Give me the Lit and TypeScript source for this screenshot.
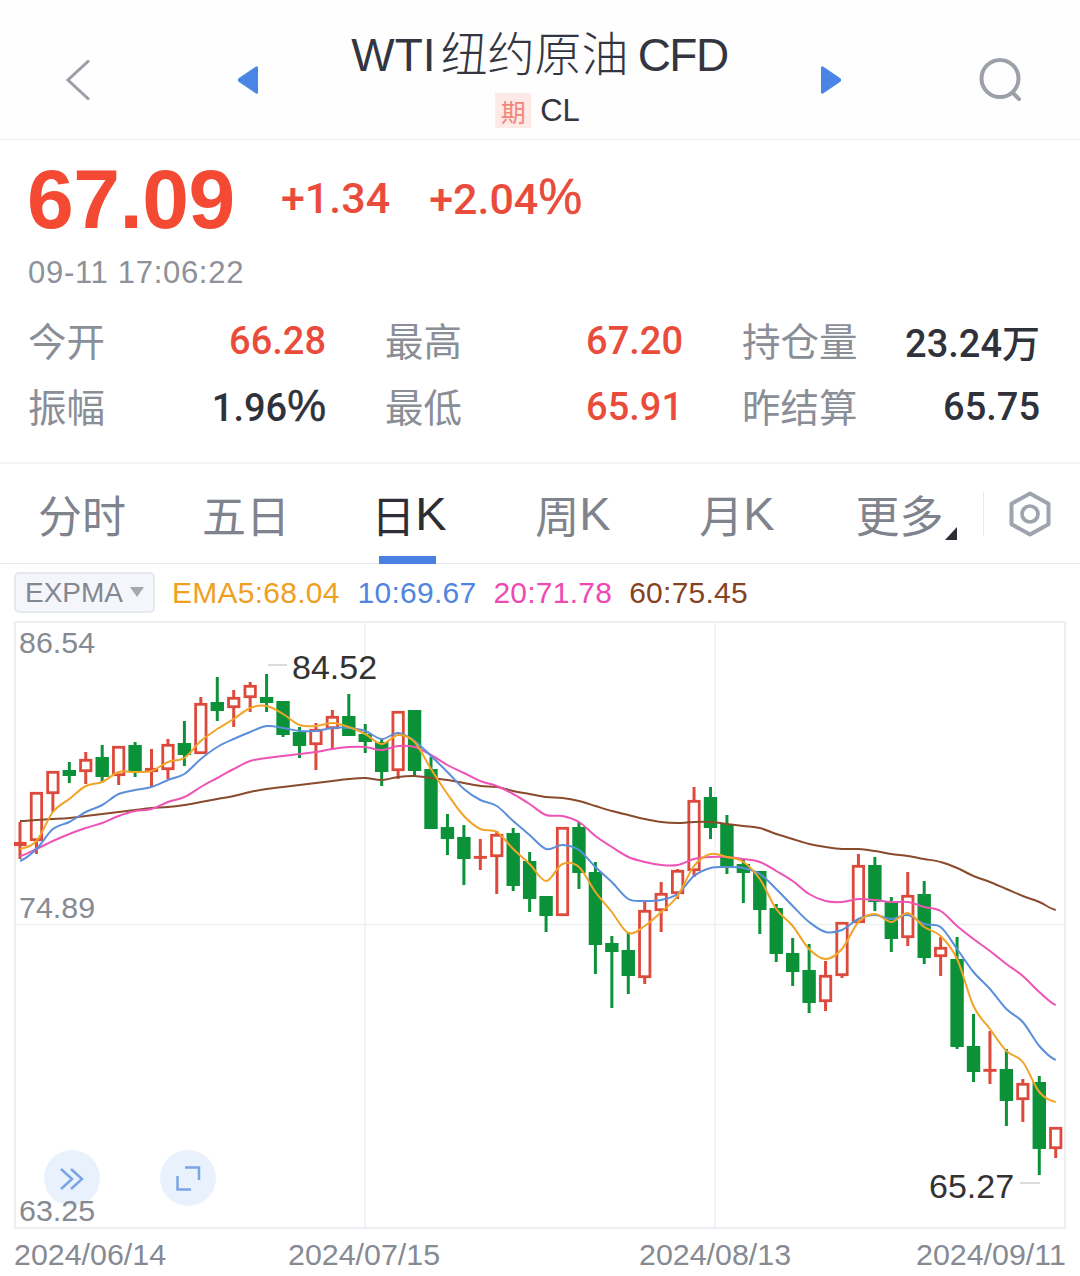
import { LitElement, html, svg, css } from "lit";
import { customElement } from "lit/decorators.js";

type Candle = [string, number, number, number, number];
const candles: Candle[] = [
["r",823,860,843,847],["r",793,855,793,842],["r",772,813,772,795],["g",763,784,771,777],["r",753,785,760,773],
["g",746,783,758,778],["r",747,786,747,777],["g",743,778,746,772],["r",750,787,769,773],["r",740,780,745,771],
["g",722,767,744,756],["r",698,755,704,755],["g",678,722,703,712],["r",691,728,698,709],["r",683,713,686,699],
["g",675,713,698,704],["g",702,738,702,736],["g",728,759,733,747],["r",724,771,730,746],["r",711,750,717,730],
["g",695,737,717,737],["g",725,754,735,743],["g",740,787,743,773],["r",712,780,712,772],["g",711,777,711,772],
["g",758,830,770,830],["g",815,856,828,840],["g",826,886,838,860],["r",840,871,857,859],["r",832,895,835,858],
["g",829,892,834,887],["g",853,913,862,900],["g",897,933,897,917],["r",828,917,828,917],["g",823,890,828,874],
["g",863,975,873,946],["g",937,1009,944,953],["g",933,995,951,977],["r",903,985,911,979],["r",883,933,894,912],
["r",870,900,871,895],["r",788,878,801,872],["g",788,840,798,829],["g",816,875,825,867],["g",860,904,865,874],
["g",872,935,872,911],["g",905,963,909,955],["g",939,987,954,973],["g",945,1014,971,1004],["r",962,1012,976,1003],
["r",923,979,923,977],["r",855,924,866,924],["g",858,912,866,903],["g",898,953,902,940],["r",873,947,896,939],
["g",882,965,895,959],["r",938,977,948,958],["g",938,1050,960,1048],["g",1015,1083,1047,1073],["r",1032,1085,1070,1072],
["g",1050,1127,1070,1102],["r",1080,1123,1084,1101],["g",1077,1176,1083,1150],["r",1128,1159,1128,1150],
];
const ema5 = [850,842,813,800,787,783,773,773,772,763,759,742,730,720,709,707,715,726,727,724,728,735,745,736,743,770,795,817,830,833,850,865,882,865,868,893,913,934,927,913,897,867,855,858,863,880,910,927,950,960,950,923,915,923,914,928,937,960,1007,1030,1052,1063,1093,1103];
const ema10 = [862,850,830,823,813,806,795,791,788,781,775,760,748,740,733,727,729,732,732,729,729,732,740,734,742,757,773,790,801,807,822,836,850,846,851,868,883,900,902,901,895,877,869,868,869,875,890,907,923,933,931,920,916,920,916,925,928,950,973,990,1010,1023,1047,1061];
const ema20 = [857,850,842,835,829,824,817,812,810,803,798,788,779,770,762,759,757,755,753,750,748,748,751,747,748,756,766,774,782,787,795,805,816,817,823,837,848,858,863,866,866,860,858,858,860,863,872,882,895,902,903,900,901,903,903,908,912,927,940,952,965,977,993,1006];
const ema60 = [822,821,820,819,817,815,813,811,809,808,806,803,800,797,793,790,788,786,784,782,780,779,781,778,777,779,781,784,787,788,792,795,798,799,802,807,812,816,820,823,824,823,823,825,827,829,835,840,845,848,850,850,852,855,857,860,863,869,877,883,890,897,903,911];

const X = (i: number) => 20 + 16.44 * i;
const curve = (a: number[]) => {
  let d = `M${X(0).toFixed(1)} ${a[0]}`;
  for (let i = 0; i < a.length - 1; i++) {
    const p0 = a[Math.max(i - 1, 0)], p1 = a[i], p2 = a[i + 1], p3 = a[Math.min(i + 2, a.length - 1)];
    const c1 = p1 + (p2 - p0) / 6, c2 = p2 - (p3 - p1) / 6;
    d += `C${(X(i) + 5.48).toFixed(1)} ${c1.toFixed(1)} ${(X(i + 1) - 5.48).toFixed(1)} ${c2.toFixed(1)} ${X(i + 1).toFixed(1)} ${p2}`;
  }
  return d;
};

@customElement("app-root")
export class AppRoot extends LitElement {
  static styles = css`
    :host { display: block; width: 1080px; height: 1276px; background: #fff; overflow: hidden;
      font-family: "Liberation Sans", "Noto Sans CJK SC", sans-serif; color: #333; }
    svg { display: block; }

    .head { display: grid; height: 140px; box-sizing: border-box; padding: 20px 0 0 66px; align-items: center;
      grid-template-columns: 24px 147px 21px 563px 21px 136px 46px; background: #fefefe;
      border-bottom: 1px solid #f0f0f2; }
    .back { grid-column: 1; }
    .prev { grid-column: 3; }
    .title-box { grid-column: 4; display: flex; flex-direction: column; align-items: center; margin-top: -2px; }
    .next { grid-column: 5; }
    .search { grid-column: 7; }
    .title { font-size: 46px; line-height: 52px; color: #333640; white-space: nowrap; }
    .title .cjk { font-size: 47px; font-weight: 300; margin: 0 9px 0 5px; }
    .title .cfd { letter-spacing: -1.5px; }
    .sub { display: flex; align-items: center; gap: 9px; margin-top: 12px; padding-right: 4px; }
    .tag { width: 36px; height: 35px; background: #fde9e6; color: #f2867a; font-size: 25px; display: flex; align-items: center; justify-content: center; }
    .code { font-size: 31px; color: #333640; line-height: 35px; }

    .quote { padding: 15px 28px 0; height: 324px; box-sizing: border-box; border-bottom: 2px solid #f2f3f5; }
    .price-row { display: flex; align-items: center; height: 88px; }
    .price { font-size: 84px; font-weight: 700; color: #f44a33; line-height: 88px; letter-spacing: -0.5px; width: 254px; margin-left: -1px; }
    .chg { font-family: Roboto, "Liberation Sans", sans-serif; font-size: 43px; font-weight: 500; color: #ea4c3c; white-space: nowrap; margin-top: -2px; }
    .chg + .chg { margin-left: 39px; }
    .pct { font-family: "Liberation Sans", sans-serif; font-size: 1.15em; font-weight: 400; -webkit-text-stroke: 0.5px currentColor; line-height: 1; }
    .time { font-size: 31px; color: #8d9199; line-height: 36px; margin-top: 12px; letter-spacing: 0.7px; }
    .stats { display: grid; grid-template-columns: repeat(3, 298px); column-gap: 59px; row-gap: 21px; margin-top: 25px; }
    .stat { display: flex; justify-content: space-between; align-items: center; height: 45px; }
    .lab { font-size: 38.500px; color: #8a8e97; font-weight: 400; }
    .val { font-family: Roboto, "Liberation Sans", "Noto Sans CJK SC", sans-serif; font-size: 38px; font-weight: 500; color: #2f323a; padding-top: 4px; }
    .val.red { color: #ea4c3c; }

    .tabs { display: grid; grid-template-columns: repeat(6, 164px) 1fr; height: 100px; box-sizing: border-box; border-bottom: 1px solid #e8eaee; }
    .tab { position: relative; display: flex; align-items: center; justify-content: center; font-size: 44px; color: #7f838d; font-weight: 400; box-sizing: border-box; }
    .tab.withk { padding-right: 2px; }
    .tab .k { font-size: 47px; }
    .tab.on { color: #2c2e33; }
    .tab.on::after { content: ""; position: absolute; bottom: -1px; left: 51px; width: 57px; height: 8px; background: #4a80e2; }
    .tab.more { padding-right: 5px; }
    .tab.more::after { content: ""; position: absolute; left: 125px; top: 63px; border-style: solid; border-width: 0 0 13px 12px; border-color: transparent transparent #2c2e33 transparent; }
    .gear { display: flex; align-items: center; gap: 25px; margin-left: -1px; }
    .gear i { width: 1px; height: 44px; background: #e8e9ec; }

    .legend { display: flex; align-items: center; height: 57px; padding-left: 14px; font-size: 30px; letter-spacing: 0.25px; }
    .select { display: flex; align-items: center; justify-content: space-between; box-sizing: border-box; width: 141px; height: 41px; padding: 0 9px 0 9px;
      background: #f5f6fb; border: 2px solid #e6e8f0; border-radius: 5px; color: #83878f; font-size: 28px; letter-spacing: 0; margin-right: 17px; }
    .select b { width: 0; height: 0; border-style: solid; border-width: 10px 7px 0 7px; border-color: #a5a8b0 transparent transparent transparent; margin-bottom: 2px; }
    .legend span { margin-right: 17px; white-space: nowrap; }
    .legend span.o { margin-right: 18px; }
    .o { color: #f0a01f; } .b { color: #5186de; } .p { color: #ee4bb2; } .br { color: #86431f; }

    .chart { position: relative; margin: 0 14px; width: 1052px; height: 608px; }
    .ylab, .mark { position: absolute; font-size: 30.4px; line-height: 34px; color: #868a92; }
    .mark { color: #333; font-size: 34px; line-height: 38px; }
    .round { position: absolute; width: 56px; height: 56px; border-radius: 50%; background: #e9f1fc; top: 529px; }
    .round svg { position: absolute; }
    .round.l { left: 30px; } .round.l svg { left: 14px; top: 16px; }
    .round.r { left: 146px; } .round.r svg { left: 15px; top: 15px; }

    .axis { display: grid; grid-template-columns: 274px 351px 277px auto; padding-left: 14px; font-size: 30.4px; line-height: 34px; color: #868a92; margin-top: 8px; }
    .y1 { left: 5px; top: 4px; } .y2 { left: 5px; top: 269px; } .y3 { left: 5px; top: 572px; }
    .m1 { left: 278px; top: 27px; } .m2 { left: 915px; top: 546px; }
  `;

  render() {
    return html`
      <div class="head">
        <svg class="back" width="24" height="42" viewBox="0 0 24 42"><path d="M23 1.5 2 21l21 19.5" fill="none" stroke="#9a9ea7" stroke-width="3"/></svg>
        <svg class="prev" width="21" height="30" viewBox="0 0 21 30"><path d="M19 1.5 2 13a2.4 2.4 0 0 0 0 4l17 11.500a1.300 1.300 0 0 0 2-1V2.500a1.300 1.300 0 0 0-2-1z" fill="#4a85e6"/></svg>
        <div class="title-box">
          <div class="title">WTI<span class="cjk">纽约原油</span><span class="cfd">CFD</span></div>
          <div class="sub"><span class="tag">期</span><span class="code">CL</span></div>
        </div>
        <svg class="next" width="21" height="30" viewBox="0 0 21 30"><path d="M2 1.500 19 13a2.400 2.400 0 0 1 0 4L2 28.500a1.300 1.300 0 0 1-2-1V2.500a1.300 1.300 0 0 1 2-1z" fill="#4a85e6"/></svg>
        <svg class="search" width="46" height="46" viewBox="0 0 46 46"><circle cx="22" cy="21.500" r="18.500" fill="none" stroke="#9ca0a9" stroke-width="4"/><path d="M35 36l6 6" fill="none" stroke="#9ca0a9" stroke-width="4" stroke-linecap="round"/></svg>
      </div>

      <div class="quote">
        <div class="price-row">
          <span class="price">67.09</span>
          <span class="chg">+1.34</span>
          <span class="chg">+2.04<span class="pct">%</span></span>
        </div>
        <div class="time">09-11 17:06:22</div>
        <div class="stats">
          <div class="stat"><span class="lab">今开</span><span class="val red">66.28</span></div>
          <div class="stat"><span class="lab">最高</span><span class="val red">67.20</span></div>
          <div class="stat"><span class="lab">持仓量</span><span class="val">23.24万</span></div>
          <div class="stat"><span class="lab">振幅</span><span class="val">1.96<span class="pct">%</span></span></div>
          <div class="stat"><span class="lab">最低</span><span class="val red">65.91</span></div>
          <div class="stat"><span class="lab">昨结算</span><span class="val">65.75</span></div>
        </div>
      </div>

      <div class="tabs">
        <div class="tab">分时</div>
        <div class="tab">五日</div>
        <div class="tab on withk">日<span class="k">K</span></div>
        <div class="tab withk">周<span class="k">K</span></div>
        <div class="tab withk">月<span class="k">K</span></div>
        <div class="tab more">更多</div>
        <div class="gear">
          <i></i>
          <svg width="42" height="46" viewBox="0 0 42 46"><path d="M21 2.500 39.500 12.700v20.600L21 43.500 2.500 33.300V12.700z" fill="none" stroke="#9ea3ae" stroke-width="4" stroke-linejoin="round"/><circle cx="21" cy="23" r="8" fill="none" stroke="#9ea3ae" stroke-width="3.700"/></svg>
        </div>
      </div>

      <div class="legend">
        <div class="select">EXPMA<b></b></div>
        <span class="o">EMA5:68.04</span>
        <span class="b">10:69.67</span>
        <span class="p">20:71.78</span>
        <span class="br">60:75.45</span>
      </div>

      <div class="chart">
        <svg width="1052" height="608" viewBox="14 622 1052 608">
          <rect x="15" y="623" width="1050" height="606" fill="#fff" stroke="#eceef3" stroke-width="2"/>
          <path d="M365 623V1229M715 623V1229M15 925.500H1065" stroke="#eef0f3" stroke-width="1.500" fill="none"/>
          <path d="M268 666H287M1020 1184H1040" stroke="#cfd1d6" stroke-width="1.500" fill="none"/>
          ${candles.map(([c, wt, wb, bt, bb], i) => {
            const x = X(i);
            if (c === "g") {
              return svg`<path d="M${x} ${wt}V${wb}" stroke="#0b9239" stroke-width="3"/>
                <rect x=${x - 6.7} y=${bt} width="13.400" height=${bb - bt} fill="#0b9239"/>`;
            }
            return svg`<path d="M${x} ${wt}V${bt}M${x} ${bb}V${wb}" stroke="#dd4a3c" stroke-width="3"/>
              <rect x=${x - 5.2} y=${bt + 1.3} width="10.400" height=${Math.max(bb - bt - 2.6, 0.1)} fill="#fff" stroke="#dd4a3c" stroke-width="2.800"/>`;
          })}
          <path d=${curve(ema60)} fill="none" stroke="#8a4a2c" stroke-width="2"/>
          <path d=${curve(ema20)} fill="none" stroke="#ee53b6" stroke-width="2"/>
          <path d=${curve(ema10)} fill="none" stroke="#5b8fdc" stroke-width="2"/>
          <path d=${curve(ema5)} fill="none" stroke="#f0a428" stroke-width="2"/>
        </svg>
        <div class="round l"><svg width="28" height="26" viewBox="0 0 28 26"><path d="M3 3l11 10L3 23M13 3l11 10-11 10" fill="none" stroke="#7ba4e3" stroke-width="2.500"/></svg></div>
        <div class="round r"><svg width="26" height="26" viewBox="0 0 26 26"><path d="M10 2.500H24V15M2.500 11V24.500H16" fill="none" stroke="#7ba4e3" stroke-width="2.500"/></svg></div>
        <span class="ylab y1">86.54</span>
        <span class="ylab y2">74.89</span>
        <span class="ylab y3">63.25</span>
        <span class="mark m1">84.52</span>
        <span class="mark m2">65.27</span>
      </div>

      <div class="axis">
        <span>2024/06/14</span><span>2024/07/15</span><span>2024/08/13</span><span>2024/09/11</span>
      </div>
    `;
  }
}
